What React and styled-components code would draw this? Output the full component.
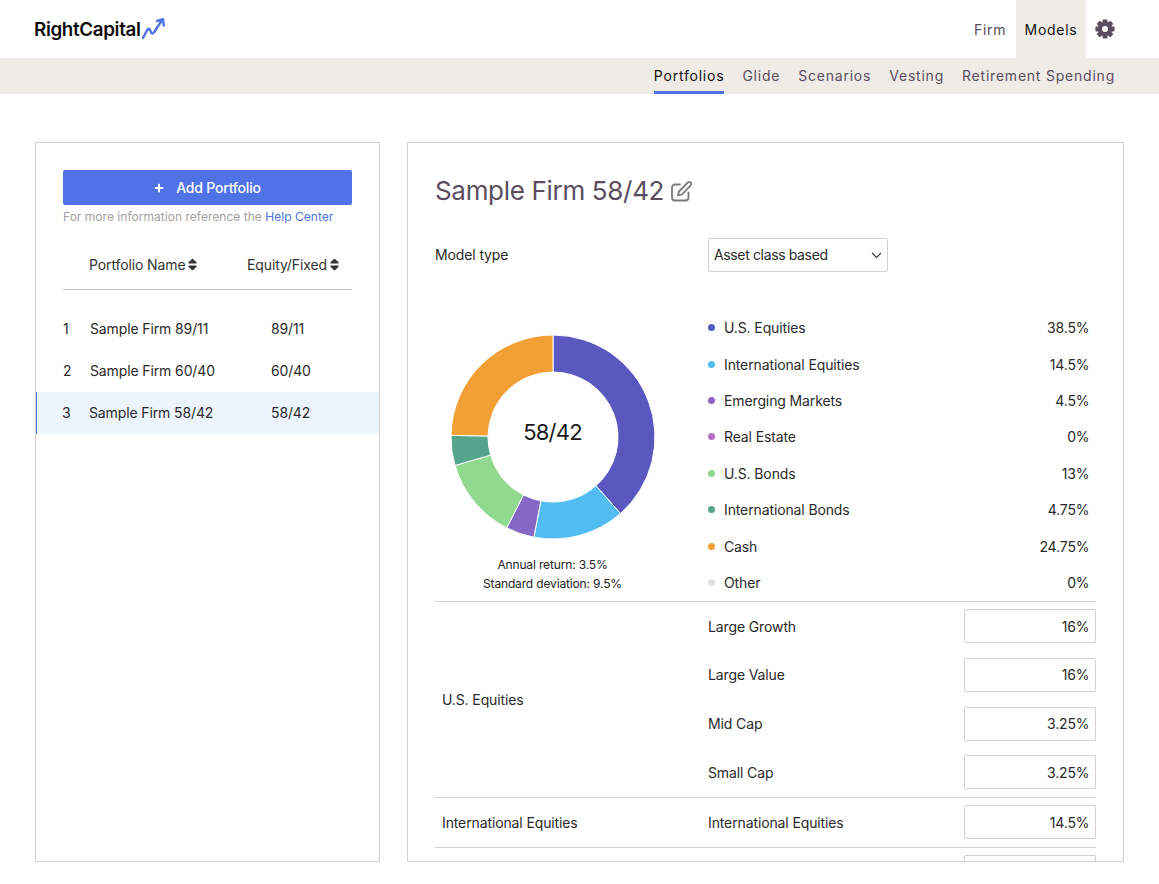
import React from "react";
import styled, { createGlobalStyle } from "styled-components";
import { FaSort, FaPlus } from "react-icons/fa";

const Global = createGlobalStyle`
  html, body { margin: 0; padding: 0; background: #fff; }
  body { font-family: Inter, "Liberation Sans", sans-serif; font-size: 14px; letter-spacing: -0.12px; color: #2a2a2a; }
  * { box-sizing: border-box; }
`;

const Page = styled.div`
  width: 1159px;
  height: 884px;
  overflow: hidden;
  display: flex;
  flex-direction: column;
`;
const Header = styled.header`
  height: 58px;
  display: flex;
  align-items: stretch;
  justify-content: space-between;
  padding: 0 44px 0 34px;
`;
const Logo = styled.div`
  display: flex;
  align-items: center;
  gap: 0;
`;
const LogoText = styled.span`
  font-size: 18.8px;
  font-weight: 600;
  letter-spacing: -0.35px;
  color: #0c0c0c;
`;
const TopNav = styled.nav`
  display: flex;
  align-items: stretch;
`;
const TopItem = styled.a`
  display: flex;
  align-items: center;
  width: ${p => (p.$active ? 70 : 42)}px;
  justify-content: ${p => (p.$active ? "center" : "flex-start")};
  font-size: 14px;
  letter-spacing: 0.7px;
  color: ${p => (p.$active ? "#111" : "#5b4d60")};
  background: ${p => (p.$active ? "#efece7" : "transparent")};
`;
const GearWrap = styled.span`
  display: flex;
  align-items: center;
  margin-left: 9px;
`;
const SubNav = styled.nav`
  height: 36px;
  background: #efece7;
  display: flex;
  justify-content: flex-end;
  gap: 18px;
  padding-right: 44px;
`;
const SubItem = styled.a`
  display: flex;
  align-items: center;
  height: 36px;
  font-size: 14px;
  letter-spacing: 0.78px;
  color: ${p => (p.$active ? "#111" : "#5b4d60")};
  border-bottom: 3px solid ${p => (p.$active ? "#4f73e6" : "transparent")};
  padding-top: 1px;
`;
const Main = styled.main`
  display: flex;
  gap: 27px;
  padding: 48px 35px 0;
  height: 768px;
`;
const Panel = styled.section`
  border: 1px solid #d5d0c8;
  height: 720px;
  overflow: hidden;
`;
const LeftPanel = styled(Panel)`
  width: 345px;
  padding: 27px 27px 0;
`;
const AddButton = styled.button`
  width: 289px;
  height: 35px;
  border: 0;
  border-radius: 2px;
  background: #4f73e6;
  color: #fff;
  font: 500 14px Inter, sans-serif;
  letter-spacing: -0.2px;
  display: flex;
  align-items: center;
  justify-content: center;
  gap: 12px;
  padding: 0;
  svg { font-size: 10px; }
`;
const Help = styled.p`
  margin: 4px 0 0;
  height: 15px;
  line-height: 15px;
  font-size: 12px;
  letter-spacing: 0.03px;
  color: #a3a09e;
  a { color: #4f73e6; }
`;
const ListHead = styled.div`
  margin-top: 18px;
  height: 48px;
  border-bottom: 1px solid #c8c3bb;
  display: flex;
  align-items: center;
  padding: 0 0 3px 26px;
  color: #333;
`;
const HeadCell = styled.span`
  display: flex;
  align-items: center;
  width: ${p => p.$w}px;
  svg { font-size: 15px; color: #333; }
`;
const List = styled.div`
  margin: 18px -27px 0;
`;
const Row = styled.div`
  height: 42px;
  display: flex;
  align-items: center;
  padding: 0 0 1px ${p => (p.$active ? 25 : 27)}px;
  background: ${p => (p.$active ? "#edf4fd" : "transparent")};
  border-left: ${p => (p.$active ? "1px solid #4f73e6" : "0")};
`;
const RowNum = styled.span`
  width: 27px;
`;
const RowName = styled.span`
  width: ${p => (p.$active ? 182 : 181)}px;
`;
const RightPanel = styled(Panel)`
  width: 717px;
  padding: 0 27px;
`;
const TitleRow = styled.div`
  height: 95px;
  display: flex;
  align-items: center;
  gap: 7px;
`;
const Title = styled.h1`
  margin: 0;
  font-size: 26px;
  font-weight: 400;
  color: #5b4d60;
  letter-spacing: -0.32px;
`;
const TypeRow = styled.div`
  height: 34px;
  display: flex;
  align-items: center;
`;
const TypeLabel = styled.span`
  width: 273px;
  padding-bottom: 1px;
`;
const Select = styled.div`
  width: 180px;
  height: 34px;
  border: 1px solid #d5d0c8;
  border-radius: 2px;
  display: flex;
  align-items: center;
  justify-content: space-between;
  padding: 0 5px 1px;
  letter-spacing: -0.36px;
`;
const Summary = styled.div`
  display: flex;
  margin-top: 38px;
  height: 292px;
  border-bottom: 1px solid #d5d0c8;
`;
const ChartCol = styled.div`
  width: 235px;
  margin-right: 38px;
  display: flex;
  flex-direction: column;
  align-items: center;
  padding-top: 24px;
`;
const DonutBox = styled.div`
  position: relative;
  width: 206px;
  height: 206px;
`;
const DonutLabel = styled.div`
  position: absolute;
  inset: 0;
  display: flex;
  align-items: center;
  justify-content: center;
  font-size: 22px;
  letter-spacing: -0.8px;
  color: #1a1a1a;
  padding-bottom: 11px;
`;
const Stats = styled.div`
  margin-top: 15px;
  font-size: 12px;
  line-height: 19px;
  letter-spacing: -0.15px;
  text-align: center;
  color: #222;
`;
const Legend = styled.ul`
  list-style: none;
  margin: -0.6px 0 0;
  padding: 0 6.5px 0 0;
  flex: 1;
`;
const LegendRow = styled.li`
  height: 36.43px;
  display: flex;
  align-items: center;
`;
const Dot = styled.i`
  width: 7px;
  height: 7px;
  border-radius: 50%;
  background: ${p => p.$c};
  margin-right: 9px;
`;
const LegendName = styled.span`
  flex: 1;
`;
const Group = styled.div`
  display: flex;
  align-items: center;
  border-bottom: 1px solid #d5d0c8;
  padding: 7px 0 8px 7px;
`;
const GroupName = styled.span`
  width: 266px;
`;
const Fields = styled.div`
  flex: 1;
  display: flex;
  flex-direction: column;
  gap: 14.75px;
`;
const Field = styled.div`
  display: flex;
  align-items: center;
  justify-content: space-between;
`;
const Input = styled.div`
  width: 132px;
  height: 34px;
  border: 1px solid #d5d0c8;
  border-radius: 2px;
  display: flex;
  align-items: center;
  justify-content: flex-end;
  padding: 0 5.5px;
`;

const slices = [
  ["U.S. Equities", 38.5, "#5a58be"],
  ["International Equities", 14.5, "#52bdf3"],
  ["Emerging Markets", 4.5, "#8567c5"],
  ["Real Estate", 0, "#b66fc9"],
  ["U.S. Bonds", 13, "#90d98e"],
  ["International Bonds", 4.75, "#55a58d"],
  ["Cash", 24.75, "#f29f36"],
  ["Other", 0, "#e2e2e2"],
];

function arc(start, end, R, r, c) {
  const pt = (a, rad) => [c + rad * Math.sin(a * 2 * Math.PI), c - rad * Math.cos(a * 2 * Math.PI)].map(v => v.toFixed(2)).join(" ");
  const large = end - start > 0.5 ? 1 : 0;
  return `M${pt(start, R)}A${R} ${R} 0 ${large} 1 ${pt(end, R)}L${pt(end, r)}A${r} ${r} 0 ${large} 0 ${pt(start, r)}Z`;
}

function Donut() {
  let acc = 0;
  return (
    <svg width="206" height="206" viewBox="0 0 206 206">
      {slices.filter(s => s[1] > 0).map(([name, v, col]) => {
        const d = arc(acc / 100, (acc + v) / 100, 102, 65, 103);
        acc += v;
        return <path key={name} d={d} fill={col} stroke="#fff" strokeWidth="1" />;
      })}
    </svg>
  );
}

function Gear() {
  return (
    <svg width="20" height="20" viewBox="0 0 20 20" fill="#5b4d60">
      {[0, 45, 90, 135, 180, 225, 270, 315].map(a => (
        <rect key={a} x="7.6" y="0.4" width="4.8" height="5" rx="1" transform={`rotate(${a} 10 10)`} />
      ))}
      <path fillRule="evenodd" d="M10 2.8a7.2 7.2 0 1 0 0 14.4a7.2 7.2 0 1 0 0-14.4zM10 7a3 3 0 1 1 0 6a3 3 0 1 1 0-6z" />
    </svg>
  );
}

const groups = [
  ["U.S. Equities", [["Large Growth", "16%"], ["Large Value", "16%"], ["Mid Cap", "3.25%"], ["Small Cap", "3.25%"]]],
  ["International Equities", [["International Equities", "14.5%"]]],
];

export default function App() {
  return (
    <Page>
      <Global />
      <Header>
        <Logo>
          <LogoText>RightCapital</LogoText>
          <svg width="25" height="24" viewBox="0 0 25 24" fill="none" stroke="#4f73e6" strokeWidth="2.4" strokeLinecap="round" strokeLinejoin="round">
            <path d="M2 21 L6.5 12.5 Q7.8 10.5 9 13 L10 15.5 Q11 17.5 12.8 15.5 L20.5 4" />
            <path d="M16 4 L22 2.2 L22.8 8.5" />
          </svg>
        </Logo>
        <TopNav>
          <TopItem>Firm</TopItem>
          <TopItem $active>Models</TopItem>
          <GearWrap><Gear /></GearWrap>
        </TopNav>
      </Header>
      <SubNav>
        <SubItem $active>Portfolios</SubItem>
        <SubItem>Glide</SubItem>
        <SubItem>Scenarios</SubItem>
        <SubItem>Vesting</SubItem>
        <SubItem>Retirement Spending</SubItem>
      </SubNav>
      <Main>
        <LeftPanel>
          <AddButton><FaPlus />Add Portfolio</AddButton>
          <Help>For more information reference the <a>Help Center</a></Help>
          <ListHead>
            <HeadCell $w={158}>Portfolio Name<FaSort /></HeadCell>
            <HeadCell>Equity/Fixed<FaSort /></HeadCell>
          </ListHead>
          <List>
            <Row><RowNum>1</RowNum><RowName>Sample Firm 89/11</RowName><span>89/11</span></Row>
            <Row><RowNum>2</RowNum><RowName>Sample Firm 60/40</RowName><span>60/40</span></Row>
            <Row $active><RowNum>3</RowNum><RowName $active>Sample Firm 58/42</RowName><span>58/42</span></Row>
          </List>
        </LeftPanel>
        <RightPanel>
          <TitleRow>
            <Title>Sample Firm 58/42</Title>
            <svg width="21" height="22" viewBox="0 0 21 22" fill="none" stroke="#7a7a7a" strokeWidth="1.8" strokeLinecap="round" strokeLinejoin="round">
              <path d="M9 4.5 H4 a3 3 0 0 0 -3 3 V17.5 a3 3 0 0 0 3 3 H14.5 a3 3 0 0 0 3 -3 V12.5" />
              <path d="M7 15.5 L8 11.5 L16.8 2.5 a1.9 1.9 0 0 1 2.8 2.8 L11 14.5 Z" />
            </svg>
          </TitleRow>
          <TypeRow>
            <TypeLabel>Model type</TypeLabel>
            <Select>
              Asset class based
              <svg width="11" height="12" viewBox="0 0 11 12" fill="none" stroke="#333" strokeWidth="1.1"><path d="M1 4 L5.5 8.5 L10 4" /></svg>
            </Select>
          </TypeRow>
          <Summary>
            <ChartCol>
              <DonutBox>
                <Donut />
                <DonutLabel>58/42</DonutLabel>
              </DonutBox>
              <Stats>Annual return: 3.5%<br />Standard deviation: 9.5%</Stats>
            </ChartCol>
            <Legend>
              {slices.map(([name, v, col]) => (
                <LegendRow key={name}>
                  <Dot $c={col} />
                  <LegendName>{name}</LegendName>
                  <span>{v}%</span>
                </LegendRow>
              ))}
            </Legend>
          </Summary>
          {groups.map(([name, items]) => (
            <Group key={name}>
              <GroupName>{name}</GroupName>
              <Fields>
                {items.map(([label, val]) => (
                  <Field key={label}>
                    <span>{label}</span>
                    <Input>{val}</Input>
                  </Field>
                ))}
              </Fields>
            </Group>
          ))}
          <Group>
            <GroupName />
            <Fields>
              <Field>
                <span />
                <Input />
              </Field>
            </Fields>
          </Group>
        </RightPanel>
      </Main>
    </Page>
  );
}
